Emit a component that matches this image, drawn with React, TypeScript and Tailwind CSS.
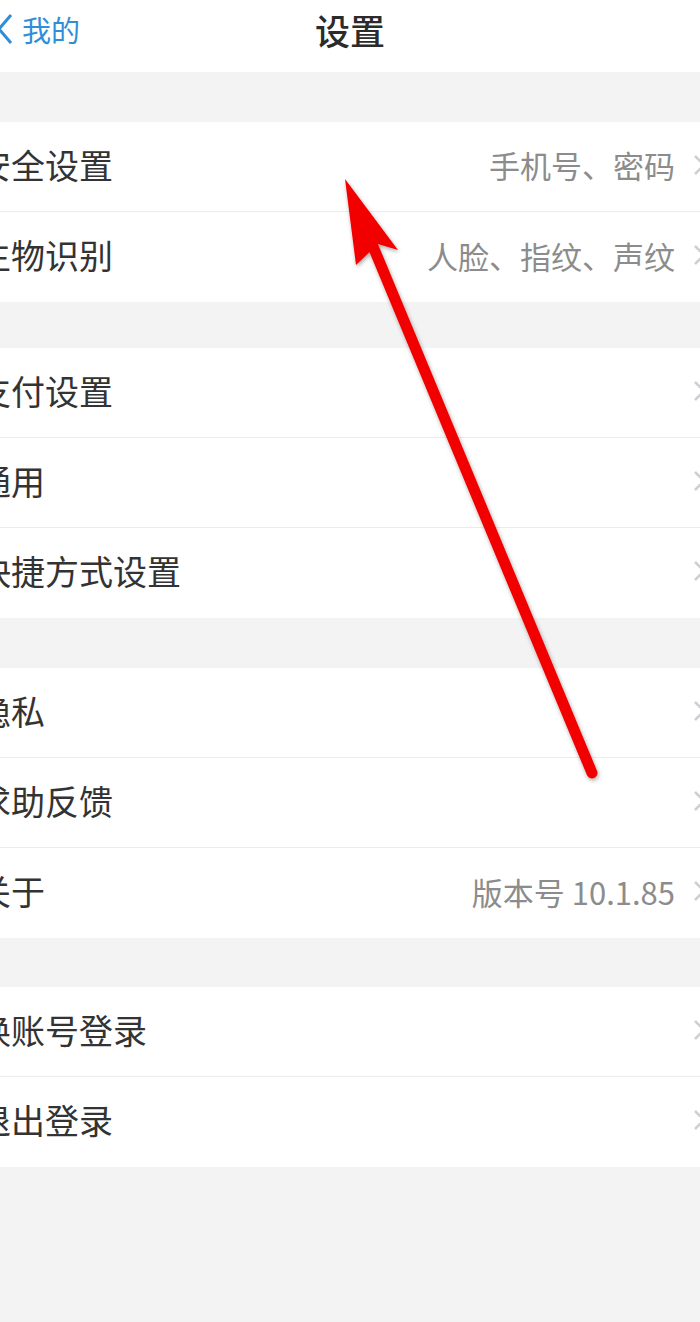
import React from "react";

const font = { fontFamily: '"Noto Sans CJK SC", "Noto Sans", sans-serif' };

type Row = { label: string; value?: string };

const sections: Row[][] = [
  [
    { label: "安全设置", value: "手机号、密码" },
    { label: "生物识别", value: "人脸、指纹、声纹" },
  ],
  [{ label: "支付设置" }, { label: "通用" }, { label: "快捷方式设置" }],
  [{ label: "隐私" }, { label: "求助反馈" }, { label: "关于", value: "版本号 10.1.85" }],
  [{ label: "换账号登录" }, { label: "退出登录" }],
];

const gaps = ["h-[50px]", "h-[46px]", "h-[50px]", "h-[49px]"];

function Chevron() {
  return (
    <svg width="6" height="22" viewBox="0 0 6 22" className="ml-[19px] shrink-0">
      <polyline points="1,2 10,11 1,20" fill="none" stroke="#cfcfd3" strokeWidth="2.5" />
    </svg>
  );
}

export default function App() {
  return (
    <div className="relative w-[700px] h-[1322px] overflow-hidden bg-[#f3f3f3]" style={font}>
      <div className="h-[72px] bg-white flex items-center relative pb-[14px]">
        <div className="flex items-center">
          <svg width="14" height="34" viewBox="0 0 14 34" className="shrink-0">
            <polyline points="11,3 -1,17 11,31" fill="none" stroke="#2f8ed8" strokeWidth="3" />
          </svg>
          <span className="ml-[8px] text-[29px] leading-none text-[#2f8ed8]">我的</span>
        </div>
        <div className="absolute inset-0 flex items-center justify-center pb-[14px]">
          <span className="text-[35px] leading-none font-medium text-[#2b2b2b]">设置</span>
        </div>
      </div>
      {sections.map((rows, si) => (
        <div key={si}>
          <div className={gaps[si]} />
          <div className="bg-white">
            {rows.map((r, ri) => (
              <div
                key={ri}
                className={`h-[90px] flex items-center pb-[4px] ${ri < rows.length - 1 ? "border-b border-[#ececec]" : ""}`}
              >
                <span className="-ml-[23px] text-[34px] leading-none text-[#333333] whitespace-nowrap">{r.label}</span>
                <div className="flex-1" />
                {r.value && (
                  <span className="text-[31px] leading-none text-[#8c8c8c] whitespace-nowrap">{r.value}</span>
                )}
                <Chevron />
              </div>
            ))}
          </div>
        </div>
      ))}
      <svg className="absolute left-0 top-0 pointer-events-none" width="700" height="1322" viewBox="0 0 700 1322">
        <defs>
          <filter id="sh" x="-20%" y="-20%" width="140%" height="140%">
            <feDropShadow dx="1" dy="2" stdDeviation="2" floodColor="#000" floodOpacity="0.35" />
          </filter>
        </defs>
        <g filter="url(#sh)">
          <line x1="592" y1="773" x2="372" y2="244" stroke="#f20000" strokeWidth="11" strokeLinecap="round" />
          <polygon points="345,179 398,250 378,244 356,265" fill="#f20000" />
        </g>
      </svg>
    </div>
  );
}
